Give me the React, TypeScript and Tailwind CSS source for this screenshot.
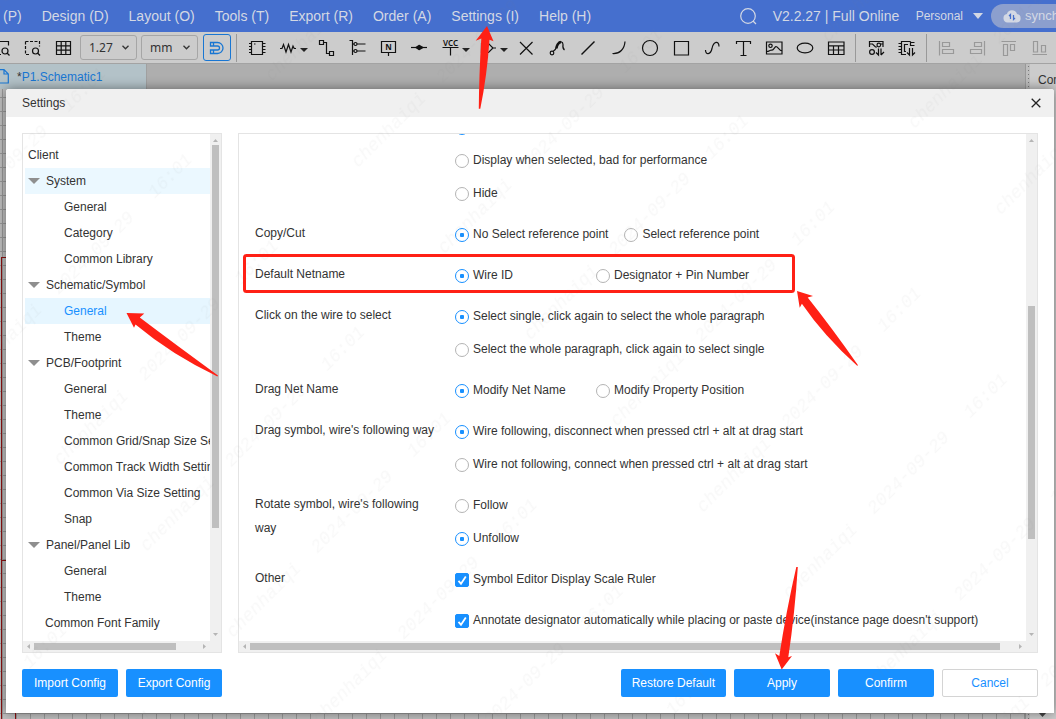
import React, { useState } from "react";

const menus = ["(P)", "Design (D)", "Layout (O)", "Tools (T)", "Export (R)", "Order (A)", "Settings (I)", "Help (H)"];

type Node = { label: string; level: 0 | 1 | 2 | 3; state?: "hover" | "active" };

const tree: Node[] = [
  { label: "Client", level: 0 },
  { label: "System", level: 1, state: "hover" },
  { label: "General", level: 2 },
  { label: "Category", level: 2 },
  { label: "Common Library", level: 2 },
  { label: "Schematic/Symbol", level: 1 },
  { label: "General", level: 2, state: "active" },
  { label: "Theme", level: 2 },
  { label: "PCB/Footprint", level: 1 },
  { label: "General", level: 2 },
  { label: "Theme", level: 2 },
  { label: "Common Grid/Snap Size Setting", level: 2 },
  { label: "Common Track Width Setting", level: 2 },
  { label: "Common Via Size Setting", level: 2 },
  { label: "Snap", level: 2 },
  { label: "Panel/Panel Lib", level: 1 },
  { label: "General", level: 2 },
  { label: "Theme", level: 2 },
  { label: "Common Font Family", level: 3 },
];

const indent = ["pl-[3px]", "pl-[3px]", "pl-[39px]", "pl-5"];

type Group = { name: string; title: string; inline?: boolean; options: string[]; selected: number };

const groups: Group[] = [
  { name: "cross", title: "", options: ["Show", "Display when selected, bad for performance", "Hide"], selected: 0 },
  { name: "copy", title: "Copy/Cut", inline: true, options: ["No Select reference point", "Select reference point"], selected: 0 },
  { name: "netname", title: "Default Netname", inline: true, options: ["Wire ID", "Designator + Pin Number"], selected: 0 },
  {
    name: "click",
    title: "Click on the wire to select",
    options: ["Select single, click again to select the whole paragraph", "Select the whole paragraph, click again to select single"],
    selected: 0,
  },
  { name: "dragnet", title: "Drag Net Name", inline: true, options: ["Modify Net Name", "Modify Property Position"], selected: 0 },
  {
    name: "dragsym",
    title: "Drag symbol, wire's following way",
    options: ["Wire following, disconnect when pressed ctrl + alt at drag start", "Wire not following, connect when pressed ctrl + alt at drag start"],
    selected: 0,
  },
  { name: "rotate", title: "Rotate symbol, wire's following way", options: ["Follow", "Unfollow"], selected: 1 },
];

function ToolButton({ label, caret, muted, children }: { label: string; caret?: boolean; muted?: boolean; children: React.ReactNode }) {
  return (
    <button aria-label={label} className={`h-6 shrink-0 ${caret ? "w-[38px]" : "w-[31px]"} ${muted ? "text-[#999]" : "text-[#111]"}`}>
      <svg width={caret ? 38 : 31} height="24" viewBox={caret ? "0 0 38 24" : "0 0 31 24"} fill="none" stroke="currentColor" strokeWidth="1.2">
        {children}
        {caret && <path d="M28 12h8l-4 4z" fill="#222" stroke="none" />}
      </svg>
    </button>
  );
}

const Divider = ({ className = "" }: { className?: string }) => <span className={`h-7 w-px shrink-0 bg-[#999] ${className}`} />;

function UnitSelect({ label, value }: { label: string; value: string }) {
  return (
    <span className="relative flex h-[25px] shrink-0 items-center">
      <select
        aria-label={label}
        defaultValue={value}
        className="h-full w-[57px] appearance-none rounded-[3px] border border-[#a6a6a6] bg-transparent pl-2 font-['Noto_Sans',sans-serif] text-xs text-[#333]"
      >
        <option>{value}</option>
      </select>
      <svg className="pointer-events-none absolute right-2" width="7" height="5" viewBox="0 0 7 5" fill="none" stroke="#333" strokeWidth="1.3">
        <path d="M.5 .8l3 3 3-3" />
      </svg>
    </span>
  );
}

function Toolbar() {
  return (
    <div className="flex h-8 shrink-0 items-center overflow-hidden border-b border-[#a3a3a3] bg-[#cccccc]">
      <button aria-label="Zoom" className="h-6 w-4 shrink-0 text-[#111]">
        <svg width="16" height="24" viewBox="0 0 16 24" fill="none" stroke="currentColor" strokeWidth="1.2">
          <path d="M0 5.500h8.500v4M0 18.500h1" />
          <circle cx="5" cy="15" r="3" />
          <path d="M7 17l2.500 2.500" />
        </svg>
      </button>
      <ToolButton label="Zoom area">
        <path d="M9.500 5.500h14v5M9.500 5.500v13h4" strokeDasharray="3 1.500" />
        <circle cx="19.500" cy="15" r="3" />
        <path d="M21.500 17l2.500 2.500" />
      </ToolButton>
      <ToolButton label="Grid">
        <path d="M9.500 5.500h14v13h-14zM9.500 9.800h14M9.500 14.200h14M14.200 5.500v13M18.800 5.500v13" />
      </ToolButton>
      <div className="ml-0.5 flex shrink-0 items-center gap-1">
        <UnitSelect label="Grid size" value="1.27" />
        <UnitSelect label="Unit" value="mm" />
        <button aria-label="Snap" className="ml-px flex h-[27px] w-7 items-center justify-center rounded-[3px] border border-[#1976d2]">
          <svg width="16" height="14" viewBox="0 0 16 14" fill="none" stroke="#1976d2" strokeWidth="1.3">
            <path d="M1.500 1.500h7a5.500 5.500 0 0 1 0 11h-7v-3.500h7a2 2 0 0 0 0-4h-7zM4.500 1.500v3.500M4.500 9v3.500" />
          </svg>
        </button>
      </div>
      <Divider className="ml-[5px] mr-1" />
      <ToolButton label="Device">
        <path d="M10.500 5.500h11v13h-11zM8 7.500h2.500M8 10.500h2.500M8 13.500h2.500M8 16.500h2.500M21.500 7.500h3M21.500 10.500h3M21.500 13.500h3M21.500 16.500h3M13 8h1.500" />
      </ToolButton>
      <ToolButton label="Resistor" caret>
        <path d="M8 12.500h2l1.500-4 2.500 7.500 2.500-7.500 2.500 7.500 2-6 1.200 2.500H24" />
      </ToolButton>
      <ToolButton label="Wire">
        <path d="M9.500 4.500h4v4h-4zM19.500 15.500h4v4h-4zM13.500 6.500h3v11h3" />
      </ToolButton>
      <ToolButton label="Bus">
        <path d="M8.500 4.500h3v14.500M11.500 8H13M16 8h8.500M11.500 15H13M16 15h8.500" />
        <circle cx="14.500" cy="8" r="1.500" />
        <circle cx="14.500" cy="15" r="1.500" />
      </ToolButton>
      <ToolButton label="Net label">
        <path d="M9.500 5.500h14v11h-14zM16.500 16.500v3.500" />
        <text x="16.500" y="14" textAnchor="middle" fontSize="8" fontWeight="700" fontFamily="Noto Sans, sans-serif" fill="currentColor" stroke="none">N</text>
      </ToolButton>
      <ToolButton label="Junction">
        <path d="M8 11.500h16" />
        <path d="M13 11.500l3-2 3.500 2-3.500 2z" fill="currentColor" strokeWidth="1.5" strokeLinejoin="round" />
      </ToolButton>
      <ToolButton label="Power" caret>
        <path d="M8.500 11.500h16M16.500 11.500v8" />
        <text x="16.500" y="10" textAnchor="middle" fontSize="8" fontWeight="600" fontFamily="Noto Sans, sans-serif" fill="currentColor" stroke="none">VCC</text>
      </ToolButton>
      <ToolButton label="Port" caret>
        <path d="M9.500 7.500h7l4.500 4.500-4.500 4.500h-7zM21 12h3" />
      </ToolButton>
      <ToolButton label="No connect">
        <path d="M10 6l12.500 12.500M22.500 6L10 18.500" />
      </ToolButton>
      <ToolButton label="Pen">
        <circle cx="11" cy="17" r="1.800" />
        <path d="M12 15.500c4-2 3-5 5-8 1.500-3 5-2 5 1-.5 3-.5 4 1.500 5.500" />
        <path d="M15.500 12.500c0-3 2-6 4.500-6.500" strokeWidth="2.500" />
      </ToolButton>
      <ToolButton label="Line">
        <path d="M9.500 18.500L22.500 5.500" strokeWidth="1.500" />
      </ToolButton>
      <ToolButton label="Arc">
        <path d="M9.500 17.500C17 18 21.500 13 22 5.500" />
      </ToolButton>
      <ToolButton label="Circle">
        <circle cx="16" cy="12" r="7.500" />
      </ToolButton>
      <ToolButton label="Rectangle">
        <path d="M9.500 5.500h14v13.500h-14z" />
      </ToolButton>
      <ToolButton label="Curve">
        <path d="M9.500 14c0 5 5 5 6.500-1.500C17.500 5 23 4.500 23 10.500" />
      </ToolButton>
      <ToolButton label="Text">
        <path d="M9.500 8V5.500h14V8M16.500 5.500v14M13.500 19.500h6" />
      </ToolButton>
      <ToolButton label="Image">
        <path d="M8.500 6h15.500v12H8.500zM8.500 15.500c3 0 3-1.500 5-1.500 2 1 3-3 4.500-3.500 2 0 3 4 6 4.500" />
        <circle cx="12.500" cy="9.800" r="1.700" />
      </ToolButton>
      <ToolButton label="Ellipse">
        <ellipse cx="16" cy="12" rx="7.800" ry="4.800" />
      </ToolButton>
      <ToolButton label="Table">
        <path d="M8.500 6h15.500v12.500H8.500zM8.500 9.800H24M8.500 14H24M13.500 9.800v8.700M18.500 9.800v8.700" />
      </ToolButton>
      <Divider className="ml-1 mr-1" />
      <ToolButton label="Schematic library">
        <path d="M9.500 11V5.500H23V11M9.500 8h3l3 3h1.500M20.500 8H23" />
        <circle cx="18.800" cy="9" r="1.800" />
        <circle cx="12" cy="16" r="2.400" />
        <path d="M18.500 12.500v6.500L16 16.500M21 19v-6.500M21 19l3-3" />
      </ToolButton>
      <ToolButton label="Device library">
        <path d="M15 18.500h-4.500v-13h9M7.500 7.500h3M7.500 10.500h3M7.500 13.500h3M7.500 16.500h3M19.500 5.500v4h4M19.500 6.500h4M17 8.500h-3.500v7H15" />
        <path d="M18.500 12v7L16 16.500M21.500 12v7l2.500-2.500" />
      </ToolButton>
      <Divider className="ml-1 mr-1" />
      <ToolButton label="Align left" muted>
        <path d="M8.500 5v14.500M11.500 6.500h7v4h-7zM11.500 13.500h11v4h-11z" />
      </ToolButton>
      <ToolButton label="Align right" muted>
        <path d="M22.500 5v14.500M12.500 6.500h7v4h-7zM8.500 13.500h11v4h-11z" />
      </ToolButton>
      <ToolButton label="Align top" muted>
        <path d="M8.500 5.500H23M10.500 8.500h4v11h-4zM17.500 8.500h4v6h-4z" />
      </ToolButton>
      <ToolButton label="Align bottom" muted>
        <path d="M8.500 18.500H23M9.500 5.500h4v10.500h-4zM17.500 9.500h4v6.500h-4z" />
      </ToolButton>
    </div>
  );
}

function ScrollbarY({ thumb }: { thumb: string }) {
  return (
    <div aria-hidden className="flex w-[11px] flex-col items-center bg-[#f0f0f0]">
      <svg width="5" height="11" viewBox="0 0 5 11" fill="#b5b5b5"><path d="M0 8h5L2.500 5z" /></svg>
      <div className="flex w-[7px] flex-1 flex-col">
        <div className={thumb} />
      </div>
      <svg width="5" height="11" viewBox="0 0 5 11" fill="#b5b5b5"><path d="M0 3h5L2.500 6z" /></svg>
    </div>
  );
}

function ScrollbarX({ thumb }: { thumb: string }) {
  return (
    <div aria-hidden className="flex h-[11px] items-center bg-[#f0f0f0] pr-[11px]">
      <svg width="11" height="5" viewBox="0 0 11 5" fill="#b5b5b5"><path d="M7 0v5L4 2.500z" /></svg>
      <div className="flex h-[7px] flex-1">
        <div className={thumb} />
      </div>
      <svg width="11" height="5" viewBox="0 0 11 5" fill="#b5b5b5"><path d="M4 0v5l3-2.500z" /></svg>
    </div>
  );
}

function TreePanel() {
  return (
    <nav aria-label="Settings sections" className="flex w-[200px] shrink-0 flex-col border border-[#e4e4e4]">
      <div className="flex min-h-0 flex-1">
        <ul className="min-w-0 flex-1 overflow-hidden pl-0.5 pt-2">
          {tree.map((n, i) => (
            <li key={i}>
              <button
                className={`flex h-[26px] w-full items-center overflow-hidden whitespace-nowrap ${indent[n.level]} ${
                  n.state === "active" ? "bg-[#e6f6ff] text-[#1890ff]" : n.state === "hover" ? "bg-[#ebf8ff]" : ""
                }`}
              >
                {n.level === 1 && (
                  <svg className="mr-1.5 shrink-0" width="12" height="6" viewBox="0 0 12 6" fill="#8f8f8f">
                    <path d="M0 0h12L6 6z" />
                  </svg>
                )}
                {n.label}
              </button>
            </li>
          ))}
        </ul>
        <ScrollbarY thumb="h-[79%] bg-[#bfbfbf]" />
      </div>
      <ScrollbarX thumb="w-[86%] bg-[#bfbfbf]" />
    </nav>
  );
}

const optionRow = "flex h-[33px] items-center gap-1 whitespace-nowrap";

function RadioGroup({ group }: { group: Group }) {
  const [value, setValue] = useState(group.selected);
  return (
    <div role="radiogroup" aria-label={group.title || "Cursor"} className="mb-2 flex shrink-0">
      <div className="w-[200px] shrink-0 pr-5 pt-1 leading-6">{group.title}</div>
      <div className={group.inline ? "flex gap-4" : "flex flex-col"}>
        {group.options.map((o, i) => (
          <label key={o} className={`${optionRow} ${group.inline ? "min-w-[125px]" : ""}`}>
            <input
              type="radio"
              name={group.name}
              checked={value === i}
              onChange={() => setValue(i)}
              className="mt-0.5 size-3.5 shrink-0 appearance-none rounded-full border border-[#b4b4b4] bg-white checked:border-[#1890ff] checked:bg-[radial-gradient(circle,#1890ff_2px,white_2.500px)]"
            />
            {o}
          </label>
        ))}
      </div>
    </div>
  );
}

function Check({ label }: { label: string }) {
  const [on, setOn] = useState(true);
  return (
    <label className={optionRow}>
      <span className="relative mt-0.5 size-3.5 shrink-0">
        <input
          type="checkbox"
          checked={on}
          onChange={() => setOn(!on)}
          className="block size-3.5 appearance-none rounded-[2px] border border-[#b4b4b4] bg-white checked:border-[#1890ff] checked:bg-[#1890ff]"
        />
        {on && (
          <svg className="pointer-events-none absolute inset-0" width="14" height="14" viewBox="0 0 14 14" fill="none" stroke="white" strokeWidth="1.800">
            <path d="M3.500 7.800l2.500 3L10.800 3.500" />
          </svg>
        )}
      </span>
      {label}
    </label>
  );
}

const primary = "h-7 min-w-24 rounded-[2px] bg-[#1890ff] px-[11px] text-white";

function Dialog() {
  return (
    <section role="dialog" aria-label="Settings" className="flex min-w-0 flex-1 flex-col overflow-hidden rounded-t-[3px] bg-white shadow-[0_0_12px_rgba(0,0,0,0.45)]">
      <header className="flex h-7 shrink-0 items-center justify-between bg-[#f0f0f0] pl-4 pr-3">
        <h1>Settings</h1>
        <button aria-label="Close" className="p-px">
          <svg width="10" height="10" viewBox="0 0 10 10" fill="none" stroke="#222" strokeWidth="1.300">
            <path d="M.7 .7l8.600 8.600M9.300 .7L.7 9.300" />
          </svg>
        </button>
      </header>
      <div className="flex min-h-0 flex-1 flex-col gap-4 p-4">
        <div className="flex min-h-0 flex-1 gap-4">
          <TreePanel />
          <div className="flex min-w-0 flex-1 flex-col border border-[#e4e4e4]">
            <div className="flex min-h-0 flex-1">
              <div className="flex min-w-0 flex-1 flex-col justify-end overflow-hidden pb-[5px] pl-4">
                {groups.map((g) => (
                  <RadioGroup key={g.name} group={g} />
                ))}
                <div className="flex shrink-0">
                  <div className="w-[200px] shrink-0 pt-1 leading-6">Other</div>
                  <div className="flex flex-col gap-2">
                    <Check label="Symbol Editor Display Scale Ruler" />
                    <Check label="Annotate designator automatically while placing or paste device(instance page doesn't support)" />
                  </div>
                </div>
              </div>
              <ScrollbarY thumb="mt-[161px] h-[233px] bg-[#bfbfbf]" />
            </div>
            <ScrollbarX thumb="w-[98%] bg-[#bfbfbf]" />
          </div>
        </div>
        <footer className="flex shrink-0 gap-2">
          <button className={primary}>Import Config</button>
          <button className={primary}>Export Config</button>
          <div className="flex-1" />
          <button className={primary}>Restore Default</button>
          <button className={primary}>Apply</button>
          <button className={primary}>Confirm</button>
          <button className="h-7 min-w-24 rounded-[2px] border border-[#d4d4d4] bg-white px-[11px] text-[#1890ff]">Cancel</button>
        </footer>
      </div>
    </section>
  );
}

function Watermark() {
  return (
    <svg aria-hidden className="pointer-events-none absolute inset-0 h-full w-full">
      <defs>
        <pattern id="mark" patternUnits="userSpaceOnUse" x="106" y="-60" width="421" height="122" patternTransform="rotate(-45)">
          <g fill="#808080" fillOpacity="0.05" fontFamily="Liberation Mono, monospace" fontStyle="italic" fontSize="18" textAnchor="middle">
            <text x="77" y="66">chenhaiqi</text>
            <text x="202" y="66">2024-09-29</text>
            <text x="311" y="66">16:01</text>
          </g>
        </pattern>
      </defs>
      <rect width="100%" height="100%" fill="url(#mark)" />
    </svg>
  );
}

function Annotations() {
  return (
    <svg aria-hidden className="pointer-events-none absolute left-0 top-0" width="1056" height="719" viewBox="0 0 1056 719" fill="#ff2015">
      <rect x="244.500" y="255.500" width="549" height="36" rx="2" fill="none" stroke="#ff2015" strokeWidth="3" />
      <path d="M487 26l6.500 15.300-4-1.500Q487 76 480.300 108.700h-1.500Q479 76 481.300 38.500l-5.600 2.200z" />
      <path d="M126.500 313l17.800.6-4.500 4Q176 345 218 375.500l-.6.900Q172 355 135.500 324.500l-1.500 3.200z" />
      <path d="M797 291l16 5-5.300 1.500Q832 328 858 365.200l-.8.500Q824 336 801.900 303.700l-2.200 4z" />
      <path d="M781.700 669.500L775 653.300l4.300 2.700Q786 612 796.300 567h1.500Q795 612 788.300 657.300l3.700-1.300z" />
    </svg>
  );
}

export default function App() {
  return (
    <div className="relative flex h-screen flex-col overflow-hidden bg-[#b0b0b0] font-['Liberation_Sans',Arial,sans-serif] text-xs text-[#333]">
      <header className="flex h-8 shrink-0 items-center overflow-hidden whitespace-nowrap bg-[#456fce] pl-[3px] text-sm text-[#d3d8e4]">
        <nav className="flex gap-5">
          {menus.map((m) => (
            <button key={m}>{m}</button>
          ))}
        </nav>
        <div className="min-w-4 flex-1" />
        <button aria-label="Search" className="mr-4 shrink-0">
          <svg width="17" height="17" viewBox="0 0 17 17" fill="none" stroke="currentColor" strokeWidth="1.200">
            <circle cx="8" cy="8" r="7.300" />
            <path d="M13 13l3 3" />
          </svg>
        </button>
        <span className="w-[143px] shrink-0">V2.2.27 | Full Online</span>
        <button className="mr-2 flex shrink-0 items-center gap-2.5 text-xs">
          Personal
          <svg width="10" height="6" viewBox="0 0 10 6" fill="currentColor"><path d="M0 0h10L5 6z" /></svg>
        </button>
        <button className="flex h-6 w-[65px] shrink-0 items-center gap-1 overflow-hidden rounded-l-full bg-[#8c9fce] pl-3 text-[13px]">
          <svg className="shrink-0" width="18" height="14" viewBox="0 0 18 14">
            <path d="M4.500 13.500a4.300 4.300 0 0 1-.6-8.500A5.300 5.300 0 0 1 14 5a4.300 4.300 0 0 1 0 8.500z" fill="#d3d8e4" />
            <path d="M7.500 10V5.500L6 7M10.500 6v4.500L12 9" stroke="#456fce" strokeWidth="1.200" fill="none" />
          </svg>
          synch
        </button>
      </header>
      <Toolbar />
      <div className="flex min-h-0 flex-1">
        <div className="flex min-w-0 flex-1 flex-col">
          <div className="flex h-[25px] shrink-0 bg-[#aeaeae]">
            <button className="flex w-[147px] items-center gap-2 border-r border-[#a0a0a0] bg-[#b3c2c8] text-[#1976d2]">
              <svg width="9" height="15" viewBox="0 0 9 15" fill="none" stroke="currentColor" strokeWidth="1.200">
                <path d="M0 .7h4l4.300 4.300v9H0M4 .7V5h4" />
              </svg>
              <span><span className="text-[#333]">*</span>P1.Schematic1</span>
            </button>
          </div>
          <svg className="min-h-0 w-full flex-1" aria-hidden>
            <defs>
              <pattern id="grid" patternUnits="userSpaceOnUse" x="2" y="8" width="14" height="14">
                <path d="M.5 0v14M0 .5h14" stroke="#999" />
              </pattern>
            </defs>
            <rect width="100%" height="100%" fill="#c0c0c0" />
            <rect width="100%" height="100%" fill="url(#grid)" />
            <path d="M1.500 168v640M1.500 168.500h10M1.500 471.500h10M15.500 610v40" stroke="#8b1010" fill="none" />
          </svg>
        </div>
        <aside className="flex w-[31px] shrink-0 border-l border-[#999] bg-[#bdbdbd]">
          <svg width="4" className="h-full" aria-hidden>
            <path d="M2.500 2V900" stroke="#777" strokeDasharray="1 3" />
          </svg>
          <div className="flex flex-1 flex-col justify-between overflow-hidden bg-[#cccccc]">
            <span className="py-2 pl-2">Common</span>
            <svg className="mb-0.5 ml-2" width="9" height="5" viewBox="0 0 9 5" fill="#444"><path d="M0 0h9L4.500 5z" /></svg>
          </div>
        </aside>
      </div>
      <div className="absolute inset-0 flex pb-1.5 pl-1.5 pr-0.5 pt-[89px]">
        <Dialog />
      </div>
      <Watermark />
      <Annotations />
    </div>
  );
}
